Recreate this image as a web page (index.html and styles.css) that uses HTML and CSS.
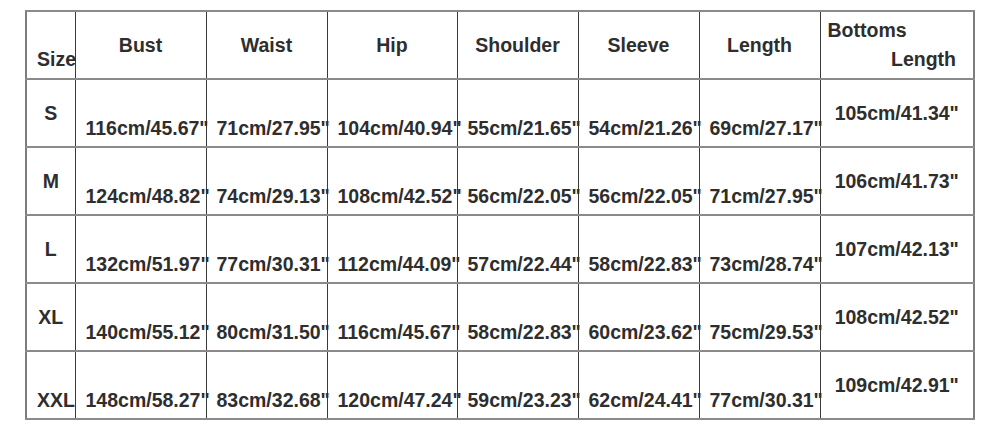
FILE: index.html
```html
<!DOCTYPE html>
<html lang="en">
<head>
<meta charset="utf-8">
<title>Size Chart</title>
<link rel="stylesheet" href="styles.css">
</head>
<body>
<div class="page">
<table class="chart">
  <colgroup>
    <col class="c-size">
    <col class="c-131">
    <col class="c-121">
    <col class="c-130">
    <col class="c-121">
    <col class="c-121">
    <col class="c-121">
    <col class="c-154">
  </colgroup>
  <thead>
    <tr>
      <th class="h-size">Size</th>
      <th>Bust</th>
      <th>Waist</th>
      <th>Hip</th>
      <th>Shoulder</th>
      <th>Sleeve</th>
      <th>Length</th>
      <th class="h-bottoms"><div class="b1">Bottoms</div><div class="b2">Length</div></th>
    </tr>
  </thead>
  <tbody>
    <tr>
      <td class="size">S</td>
      <td>116cm/45.67"</td>
      <td>71cm/27.95"</td>
      <td>104cm/40.94"</td>
      <td>55cm/21.65"</td>
      <td>54cm/21.26"</td>
      <td>69cm/27.17"</td>
      <td class="last">105cm/41.34"</td>
    </tr>
    <tr>
      <td class="size">M</td>
      <td>124cm/48.82"</td>
      <td>74cm/29.13"</td>
      <td>108cm/42.52"</td>
      <td>56cm/22.05"</td>
      <td>56cm/22.05"</td>
      <td>71cm/27.95"</td>
      <td class="last">106cm/41.73"</td>
    </tr>
    <tr>
      <td class="size">L</td>
      <td>132cm/51.97"</td>
      <td>77cm/30.31"</td>
      <td>112cm/44.09"</td>
      <td>57cm/22.44"</td>
      <td>58cm/22.83"</td>
      <td>73cm/28.74"</td>
      <td class="last">107cm/42.13"</td>
    </tr>
    <tr>
      <td class="size">XL</td>
      <td>140cm/55.12"</td>
      <td>80cm/31.50"</td>
      <td>116cm/45.67"</td>
      <td>58cm/22.83"</td>
      <td>60cm/23.62"</td>
      <td>75cm/29.53"</td>
      <td class="last">108cm/42.52"</td>
    </tr>
    <tr>
      <td class="size size-low">XXL</td>
      <td>148cm/58.27"</td>
      <td>83cm/32.68"</td>
      <td>120cm/47.24"</td>
      <td>59cm/23.23"</td>
      <td>62cm/24.41"</td>
      <td>77cm/30.31"</td>
      <td class="last">109cm/42.91"</td>
    </tr>
  </tbody>
</table>
</div>
</body>
</html>
```

FILE: styles.css
```css
html, body {
  margin: 0;
  padding: 0;
  background: #ffffff;
}

.page {
  padding: 10px 0 0 25px;
}

.chart {
  border-collapse: collapse;
  table-layout: fixed;
  width: 949px;
  border: 2px solid #7c7c7c;
  font-family: "Liberation Sans", Arial, sans-serif;
  font-weight: bold;
  font-size: 19.5px;
  line-height: 22px;
  color: #2e2e2e;
}

.c-size { width: 49px; }
.c-131 { width: 131px; }
.c-121 { width: 121px; }
.c-130 { width: 130px; }
.c-154 { width: 154px; }

.chart tr {
  height: 68px;
}

.chart th,
.chart td {
  white-space: nowrap;
  overflow: visible;
  border-left: 1px solid #3a3a3a;
  border-right: 1px solid #3a3a3a;
  border-top: 2px solid #8a8a8a;
  border-bottom: 2px solid #8a8a8a;
  box-sizing: border-box;
}

.chart th {
  font-weight: bold;
  text-align: center;
  vertical-align: middle;
  padding: 0 4px;
}

.chart th.h-size {
  text-align: left;
  vertical-align: bottom;
  padding: 0 0 8px 10px;
}

.chart th.h-bottoms {
  text-align: left;
  vertical-align: top;
  padding: 4px 0 0 7px;
}

.h-bottoms .b1,
.h-bottoms .b2 {
  line-height: 29px;
}

.h-bottoms .b2 {
  text-align: right;
  padding-right: 17px;
}

.chart td {
  text-align: left;
  vertical-align: bottom;
  padding: 0 0 7px 10px;
}

.chart td.size {
  text-align: center;
  vertical-align: middle;
  padding: 0 10px;
}

.chart td.size-low {
  vertical-align: bottom;
  padding-bottom: 7px;
}

.chart td.last {
  text-align: center;
  vertical-align: middle;
  padding: 0;
}
```
